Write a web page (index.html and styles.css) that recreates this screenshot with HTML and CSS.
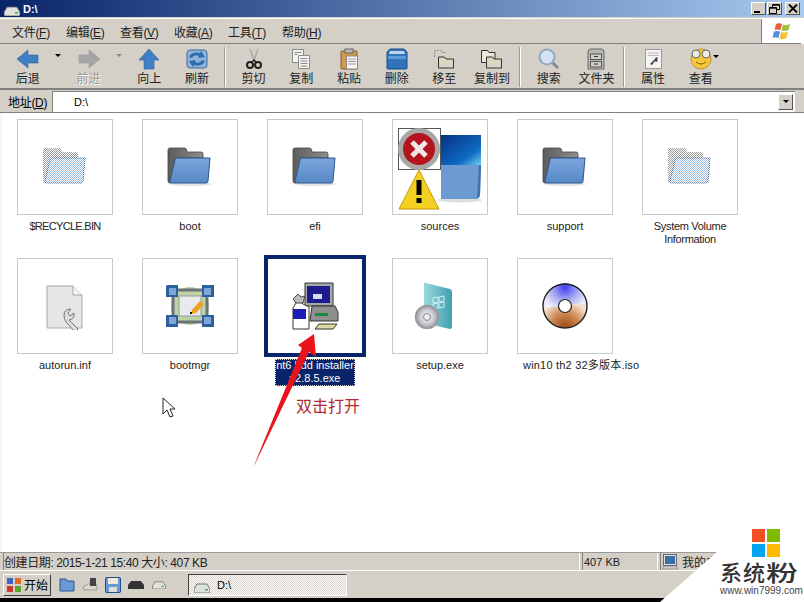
FILE: index.html
```html
<!DOCTYPE html>
<html lang="zh-CN">
<head>
    <meta charset="UTF-8">
    <title>D:\</title>
    <link rel="stylesheet" href="styles.css">
</head>
<body>
    <svg class="defs" width="0" height="0">
        <defs>
            <pattern id="dots" width="2" height="2" patternUnits="userSpaceOnUse">
                <rect width="1" height="1" fill="#fff"/>
                <rect x="1" y="1" width="1" height="1" fill="#fff"/>
            </pattern>
            <linearGradient id="folderBack" x1="0" y1="0" x2="1" y2="0">
                <stop offset="0" stop-color="#5c5c5c"/>
                <stop offset="1" stop-color="#8f8f8f"/>
            </linearGradient>
            <linearGradient id="folderFront" x1="0" y1="0" x2="0" y2="1">
                <stop offset="0" stop-color="#7ba6dc"/>
                <stop offset="1" stop-color="#5688c6"/>
            </linearGradient>
            <radialGradient id="discGrad" cx="0.5" cy="0.5" r="0.5">
                <stop offset="0" stop-color="#fff"/>
                <stop offset="0.6" stop-color="#c9c9d2"/>
                <stop offset="1" stop-color="#8d8d92"/>
            </radialGradient>
            <radialGradient id="udiscTop" gradientUnits="userSpaceOnUse" cx="23" cy="4" r="24">
                <stop offset="0" stop-color="#3c3cf2"/>
                <stop offset="0.55" stop-color="#a9a9f2"/>
                <stop offset="1" stop-color="#eeeefc"/>
            </radialGradient>
            <radialGradient id="udiscBottom" gradientUnits="userSpaceOnUse" cx="23" cy="44" r="26">
                <stop offset="0" stop-color="#9c4c18"/>
                <stop offset="0.55" stop-color="#cf8a54"/>
                <stop offset="1" stop-color="#f3e2d0"/>
            </radialGradient>
            <symbol id="folder" viewBox="0 0 48 48">
                <ellipse cx="24" cy="41" rx="21" ry="2" fill="#dfe3ea"/>
                <path d="M2 7q0-2 2-2h15q1.500 0 2 4h14q2 0 2 2v4H9L5 40H4q-2 0-2-2z" fill="url(#folderBack)" stroke="#444" stroke-width=".8"/>
                <path d="M9.500 15h34.500L42 38q0 2-2 2H6q-2 0-2-2z" fill="url(#folderFront)" stroke="#2f5587"/>
            </symbol>
            <symbol id="folderGhost" viewBox="0 0 48 48">
                <path d="M2 7q0-2 2-2h15q1.500 0 2 4h14q2 0 2 2v4H9L5 40H4q-2 0-2-2z" fill="#9a9a9a"/>
                <path d="M9.500 15h34.500L42 38q0 2-2 2H6q-2 0-2-2z" fill="#9dbde6" stroke="#2f5587"/>
                <rect width="48" height="48" fill="url(#dots)"/>
            </symbol>
            <symbol id="drive" viewBox="0 0 16 10">
                <path d="M3 1h10l3 5v3q0 1-1 1H1q-1 0-1-1V6z" fill="#dfe3dc" stroke="#555" stroke-width=".8"/>
                <rect x="11" y="6" width="3" height="1.500" fill="#4a4"/>
            </symbol>
        </defs>
    </svg>

    <div class="window">
        <div class="titlebar">
            <svg class="title-icon" width="16" height="10"><use href="#drive"/></svg>
            <span class="title-text">D:\</span>
            <div class="win-buttons">
                <span class="win-btn"><i class="min-mark"></i></span>
                <span class="win-btn"><svg width="11" height="10" viewBox="0 0 11 10"><path d="M3.500 3V.5h7v5H8M.5 3.500h7v6h-7z M.5 4.200h7M3.500 1.200h7" fill="none" stroke="#000"/></svg></span>
                <span class="win-btn close-btn"><svg width="10" height="9" viewBox="0 0 10 9"><path d="M1 .5l8 8M9 .5l-8 8" stroke="#000" stroke-width="1.800"/></svg></span>
            </div>
        </div>

        <div class="menubar">
            <div class="menu-items">
                <span>文件(<u>F</u>)</span>
                <span>编辑(<u>E</u>)</span>
                <span>查看(<u>V</u>)</span>
                <span>收藏(<u>A</u>)</span>
                <span>工具(<u>T</u>)</span>
                <span>帮助(<u>H</u>)</span>
            </div>
            <div class="brand">
                <svg width="20" height="19" viewBox="0 0 20 19">
                    <path d="M4 2q3-1.500 6 0l-1.500 6q-3-1-6 0z" fill="#e8603a"/>
                    <path d="M11 2.500q3 1.500 7-.5l-1.500 6q-3.500 1.500-7 .5z" fill="#9ac23c"/>
                    <path d="M2 9.500q3-1 6 0L6.500 16q-3-1.500-6 0z" fill="#4f8fdc"/>
                    <path d="M9 10q3.500 1 7-.5L14.500 16q-3.500 2-7 .5z" fill="#f2c23a"/>
                </svg>
            </div>
        </div>

        <div class="toolbar">
            <div class="tool">
                <svg width="24" height="22" viewBox="0 0 24 22"><path d="M1 11L12 2v5h10v8H12v5z" fill="#3f7fc4" stroke="#2a5f9e" stroke-width=".6"/></svg>
                <span>后退</span>
            </div>
            <div class="drop"><i class="caret"></i></div>
            <div class="tool tool-off">
                <svg width="24" height="22" viewBox="0 0 24 22"><path d="M23 11L12 2v5H2v8h10v5z" fill="#a5a5a5" stroke="#999" stroke-width=".6"/></svg>
                <span>前进</span>
            </div>
            <div class="drop"><i class="caret caret-off"></i></div>
            <div class="tool">
                <svg width="24" height="22" viewBox="0 0 24 22"><path d="M12 1l10 11h-5v9H7v-9H2z" fill="#3f7fc4" stroke="#2a5f9e" stroke-width=".6"/></svg>
                <span>向上</span>
            </div>
            <div class="tool">
                <svg width="24" height="22" viewBox="0 0 24 22">
                    <rect x="2" y="2" width="20" height="18" rx="3" fill="#8fb3d9" stroke="#3a6ea5"/>
                    <path d="M4 9q3-6 11-4l1-2 4 6-7 1 1-2q-5-2-7 2z" fill="#2f6cae"/>
                    <path d="M20 13q-3 6-11 4l-1 2-4-6 7-1-1 2q5 2 7-2z" fill="#2f6cae"/>
                </svg>
                <span>刷新</span>
            </div>
            <div class="tool-sep"></div>
            <div class="tool">
                <svg width="24" height="22" viewBox="0 0 24 22" fill="none">
                    <path d="M8 1l4 11M16 1l-4 11" stroke="#a9a9a9" stroke-width="1.400"/>
                    <circle cx="8" cy="17" r="3" stroke="#222" stroke-width="2"/>
                    <circle cx="16" cy="17" r="3" stroke="#222" stroke-width="2"/>
                    <path d="M10 14l2-2 2 2" stroke="#222" stroke-width="1.500"/>
                </svg>
                <span>剪切</span>
            </div>
            <div class="tool">
                <svg width="24" height="22" viewBox="0 0 24 22" fill="#f4f4f2" stroke="#8a8a8a">
                    <path d="M3.500 1.500h11v13h-11z"/>
                    <path d="M9.500 7.500h11v13h-11z"/>
                    <path d="M5.500 4.500h7M5.500 6.500h3M11.500 10.500h7M11.500 13h7M11.500 15.500h7M11.500 18h7" fill="none"/>
                </svg>
                <span>复制</span>
            </div>
            <div class="tool">
                <svg width="24" height="22" viewBox="0 0 24 22">
                    <rect x="4" y="3" width="16" height="18" rx="1" fill="#d39a4e" stroke="#8a5a20"/>
                    <rect x="8" y="1" width="8" height="4" fill="#b9b9b9" stroke="#666"/>
                    <rect x="9.500" y="8" width="11" height="13" fill="#f6f6f4" stroke="#888"/>
                    <path d="M11 11h8M11 13.500h8M11 16h8" stroke="#999"/>
                </svg>
                <span>粘贴</span>
            </div>
            <div class="tool">
                <svg width="24" height="22" viewBox="0 0 24 22">
                    <path d="M2 4l3-3h14l3 3v16q0 1-1 1H3q-1 0-1-1z" fill="#2f73b8" stroke="#1c4d85"/>
                    <path d="M5 3h14l1 3H4z" fill="#bcd4ea"/>
                    <path d="M3 8h18v3H3z" fill="#5c9bd8"/>
                </svg>
                <span>删除</span>
            </div>
            <div class="tool">
                <svg width="24" height="22" viewBox="0 0 24 22">
                    <path d="M2.500 9V2.500h6l1.500 2h4" fill="none" stroke="#888" stroke-dasharray="2 1"/>
                    <path d="M6.500 9h6l1.500 2h7.500v9h-15z" fill="#d8d8c0" stroke="#333"/>
                </svg>
                <span>移至</span>
            </div>
            <div class="tool">
                <svg width="24" height="22" viewBox="0 0 24 22">
                    <path d="M1.500 2.500h6l1.500 2h6v10h-13.500z" fill="#e8e8d8" stroke="#333"/>
                    <path d="M6.500 9h6l1.500 2h7.500v9h-15z" fill="#d8d8c0" stroke="#333"/>
                </svg>
                <span>复制到</span>
            </div>
            <div class="tool-sep"></div>
            <div class="tool">
                <svg width="24" height="22" viewBox="0 0 24 22">
                    <path d="M15 14l6 6" stroke="#888" stroke-width="3"/>
                    <circle cx="10" cy="9" r="7.500" fill="#d5e3f3" stroke="#93a9c3" stroke-width="2"/>
                </svg>
                <span>搜索</span>
            </div>
            <div class="tool">
                <svg width="24" height="22" viewBox="0 0 24 22">
                    <path d="M4 4q0-3 3-3h10q3 0 3 3v17H4z" fill="#b9b9b4" stroke="#666"/>
                    <rect x="6.500" y="6" width="11" height="5.500" fill="#cfcfca" stroke="#555"/>
                    <rect x="6.500" y="13.500" width="11" height="5.500" fill="#cfcfca" stroke="#555"/>
                    <path d="M10 8.500h4M10 16h4" stroke="#333"/>
                </svg>
                <span>文件夹</span>
            </div>
            <div class="tool-sep"></div>
            <div class="tool">
                <svg width="24" height="22" viewBox="0 0 24 22">
                    <rect x="4.500" y="1.500" width="16" height="19" fill="#f4f4f2" stroke="#9a9a9a"/>
                    <path d="M7 5h11M7 7.500h11" stroke="#bbb"/>
                    <path d="M9 16l5-5 1-2 2 1-1 2 1 1-2 1-1-1-3 4z" fill="#444"/>
                </svg>
                <span>属性</span>
            </div>
            <div class="tool tool-view">
                <svg width="24" height="22" viewBox="0 0 24 22">
                    <circle cx="12" cy="11" r="10" fill="#f5c83c" stroke="#c8902a"/>
                    <circle cx="7" cy="6" r="4" fill="#e8efe8" stroke="#666"/>
                    <circle cx="17" cy="6" r="4" fill="#e8efe8" stroke="#666"/>
                    <path d="M7 14q5 4 10 0" fill="none" stroke="#7a5a10"/>
                </svg>
                <span>查看</span>
                <i class="caret caret-view"></i>
            </div>
        </div>

        <div class="addressbar">
            <span class="addr-label">地址(<u>D</u>)</span>
            <div class="addr-input">
                <span class="addr-text">D:\</span>
                <span class="addr-drop"><i class="caret"></i></span>
            </div>
        </div>

        <div class="files">
            <div class="file">
                <div class="tile"><svg width="48" height="48"><use href="#folderGhost"/></svg></div>
                <div class="name name-caps">$RECYCLE.BIN</div>
            </div>
            <div class="file">
                <div class="tile"><svg width="48" height="48"><use href="#folder"/></svg></div>
                <div class="name">boot</div>
            </div>
            <div class="file">
                <div class="tile"><svg width="48" height="48"><use href="#folder"/></svg></div>
                <div class="name">efi</div>
            </div>
            <div class="file">
                <div class="tile tile-sources">
                    <svg width="84" height="82" viewBox="0 0 84 82">
                        <defs>
                            <linearGradient id="sky" x1="0" y1="0" x2="1" y2="1">
                                <stop offset="0" stop-color="#05317f"/>
                                <stop offset="0.7" stop-color="#0f6cc4"/>
                                <stop offset="1" stop-color="#6fd0ee"/>
                            </linearGradient>
                        </defs>
                        <ellipse cx="62" cy="72" rx="22" ry="2.500" fill="#ddd"/>
                        <rect x="43" y="7" width="40" height="30" fill="url(#sky)"/>
                        <path d="M43 37h40l-1 30q0 4-4 4H43z" fill="#6b9bd0"/>
                        <path d="M81 37h2l-1 30-3 4z" fill="#3f70aa"/>
                        <rect x=".5" y=".5" width="42" height="41" fill="#fff" stroke="#555"/>
                        <circle cx="21" cy="21" r="21" fill="#a8a8a8"/>
                        <circle cx="21" cy="21" r="16" fill="#b3141e"/>
                        <path d="M14 14l14 14M28 14L14 28" stroke="#f2e6e6" stroke-width="5"/>
                        <path d="M21 42l20 39H1z" fill="#f3d020" stroke="#c69a10"/>
                        <rect x="18.500" y="52" width="5" height="15" fill="#000"/>
                        <rect x="18.500" y="70" width="5" height="5" fill="#000"/>
                    </svg>
                </div>
                <div class="name">sources</div>
            </div>
            <div class="file">
                <div class="tile"><svg width="48" height="48"><use href="#folder"/></svg></div>
                <div class="name">support</div>
            </div>
            <div class="file">
                <div class="tile"><svg width="48" height="48"><use href="#folderGhost"/></svg></div>
                <div class="name name-tight">System Volume Information</div>
            </div>
            <div class="file">
                <div class="tile">
                    <svg width="48" height="48" viewBox="0 0 48 48">
                        <path d="M6 4h26l9 9v33H6z" fill="#e6e6e6" stroke="#a8a8a8"/>
                        <path d="M32 4v9h9" fill="#f5f5f5" stroke="#a8a8a8"/>
                        <path d="M23 33q0-6 7-6l-3 4 2 3 4-3q1 6-5 7l9 9-3 3-9-10q-2-3-2-7z" fill="#dcdcdc" stroke="#777"/>
                    </svg>
                </div>
                <div class="name">autorun.inf</div>
            </div>
            <div class="file">
                <div class="tile">
                    <svg width="48" height="42" viewBox="0 0 48 42">
                        <circle cx="24" cy="21" r="19" fill="#bcd3a4"/>
                        <rect x="7" y="5" width="34" height="32" fill="none" stroke="#6d7278" stroke-width="3"/>
                        <rect x="13" y="11" width="22" height="20" fill="#e8eaec" stroke="#999"/>
                        <path d="M1 0h11v12H0V1zM36 0h12v12H36zM0 30h12v12H0zM36 30h12v12H36z" fill="#2f5f9e"/>
                        <path d="M3 3h7v7H3zM38 3h7v7h-7zM3 32h7v7H3zM38 32h7v7h-7z" fill="#7ea6d6"/>
                        <path d="M26 25l8-9 4 3-8 9-5 1z" fill="#f0a020"/>
                        <rect x="24" y="27" width="2" height="2" fill="#111"/>
                    </svg>
                </div>
                <div class="name">bootmgr</div>
            </div>
            <div class="file file-selected">
                <div class="tile">
                    <svg width="48" height="48" viewBox="0 0 48 48">
                        <path d="M14 1h28v23H14z" fill="#a8a8a8" stroke="#333"/>
                        <rect x="16" y="4" width="23" height="17" fill="#1c1c8e"/>
                        <rect x="22" y="12" width="9" height="5" fill="#dcdcf0"/>
                        <path d="M21 24h23l3 6v9H19z" fill="#8f8f8f" stroke="#333"/>
                        <rect x="24" y="31" width="13" height="3" fill="#1a8a3a"/>
                        <path d="M24 47l4-5h18l-4 5z" fill="#e0d8a0" stroke="#333"/>
                        <path d="M2 26l5-8 5 4 6 3v22H2z" fill="#fff" stroke="#333"/>
                        <path d="M2 27h13v10H2z" fill="#1c1cb8"/>
                        <path d="M2 17l5-5 3 3 4-1-2 7H5z" fill="#bbb" stroke="#444"/>
                    </svg>
                </div>
                <div class="name"><span>nt6 hdd installer v2.8.5.exe</span></div>
            </div>
            <div class="file">
                <div class="tile tile-setup">
                    <svg width="40" height="48" viewBox="0 0 40 48">
                        <defs>
                            <linearGradient id="book" x1="0" y1="0" x2="1" y2="0">
                                <stop offset="0" stop-color="#9ad8dc"/>
                                <stop offset="1" stop-color="#3f9fb0"/>
                            </linearGradient>
                        </defs>
                        <path d="M10 2q0-2 2-1l24 6q2 1 2 3v34q0 3-2 3l-26-6z" fill="url(#book)"/>
                        <path d="M19 16l5-1v5l-5 1zM25 15l5-1v5l-5 1zM19 22l5-1v5l-5 1zM25 21l5-1v5l-5 1z" fill="none" stroke="#d2eef0"/>
                        <circle cx="13" cy="35" r="12" fill="url(#discGrad)" stroke="#999" stroke-width=".5"/>
                        <circle cx="13" cy="35" r="3.500" fill="#eee" stroke="#888"/>
                    </svg>
                </div>
                <div class="name">setup.exe</div>
            </div>
            <div class="file">
                <div class="tile">
                    <svg width="46" height="46" viewBox="0 0 46 46">
                        <path d="M1 25A22 22 0 0 1 45 20z" fill="url(#udiscTop)"/>
                        <path d="M1 25l44-5A22 22 0 0 1 1 25z" fill="url(#udiscBottom)"/>
                        <circle cx="23" cy="23" r="22" fill="none" stroke="#222" stroke-width="1.400"/>
                        <circle cx="23" cy="23" r="6.500" fill="#fff" stroke="#222" stroke-width="1.200"/>
                    </svg>
                </div>
                <div class="name name-wide">win10 th2 32多版本.iso</div>
            </div>
        </div>

        <div class="statusbar">
            <div class="panel panel-main">创建日期: 2015-1-21 15:40 大小: 407 KB</div>
            <div class="panel panel-size">407 KB</div>
            <div class="panel panel-zone">
                <svg width="16" height="16" viewBox="0 0 16 16">
                    <rect x="1.500" y=".5" width="13" height="11" fill="#ddd" stroke="#666"/>
                    <rect x="3" y="2" width="10" height="8" fill="#3a6ea5"/>
                    <path d="M0 15l2-3h12l2 3z" fill="#ccc" stroke="#777" stroke-width=".6"/>
                </svg>
                <span>我的电</span>
            </div>
        </div>

        <div class="taskbar">
            <div class="start-btn">
                <svg width="14" height="14" viewBox="0 0 14 14">
                    <rect width="6" height="6" fill="#3b66c4"/>
                    <rect x="8" width="6" height="6" fill="#e26b1e"/>
                    <rect y="8" width="6" height="6" fill="#d0342c"/>
                    <rect x="8" y="8" width="6" height="6" fill="#5aa32c"/>
                </svg>
                <span>开始</span>
            </div>
            <div class="quick">
                <svg width="16" height="15" viewBox="0 0 16 15"><path d="M1 2h6l1 2h7v10H1z" fill="#6a9ad4" stroke="#2f5587"/></svg>
                <svg width="16" height="15" viewBox="0 0 16 15"><path d="M1 10l5-3h8l1 3v3H2z" fill="#d8d8d0" stroke="#777" stroke-width=".6"/><rect x="8" y="1" width="6" height="8" fill="#444"/></svg>
                <svg width="16" height="16" viewBox="0 0 16 16"><rect x=".5" y=".5" width="15" height="15" rx="1" fill="#6a9ad4" stroke="#1c4d85"/><rect x="3" y="1" width="10" height="6" fill="#f0e8d8"/><rect x="4" y="10" width="8" height="5" fill="#ddd"/></svg>
                <svg width="16" height="8" viewBox="0 0 16 8"><path d="M3 0h10l3 4v4H0V4z" fill="#333"/></svg>
                <svg width="16" height="8" viewBox="0 0 16 8"><use href="#drive"/></svg>
            </div>
            <div class="task-btn">
                <svg width="16" height="10"><use href="#drive"/></svg>
                <span>D:\</span>
            </div>
        </div>
        <div class="screen-edge"></div>
    </div>

    <!-- 标注和水印 -->
    <svg class="arrow" width="80" height="140" viewBox="0 0 80 140">
        <path d="M1 135L50 15l-4-3L62 1l2 23-7-5z" fill="#e8131b"/>
    </svg>
    <div class="note">双击打开</div>
    <svg class="cursor" width="14" height="22" viewBox="0 0 14 22">
        <path d="M1 1v16l4-4 3 7 3-1-3-7h5z" fill="#fff" stroke="#222"/>
    </svg>
    <div class="watermark">
        <div class="wm-logo"><i class="wm-r"></i><i class="wm-g"></i><i class="wm-b"></i><i class="wm-y"></i></div>
        <div class="wm-name">系统<span class="wm-fen">粉</span></div>
        <div class="wm-url">www.win7999.com</div>
    </div>
</body>
</html>
```

FILE: styles.css
```css
/* janela */
html, body {
    margin: 0;
    padding: 0;
    width: 804px;
    height: 602px;
    overflow: hidden;
    background-color: #fff;
}
body {
    position: relative;
    font-family: "Liberation Sans", "Noto Sans CJK SC", sans-serif;
    font-size: 12px;
    color: #000;
}
.defs {
    position: absolute;
}
.window {
    display: flex;
    flex-direction: column;
    height: 602px;
}

/* barra de titulo */
.titlebar {
    display: flex;
    align-items: center;
    height: 17px;
    flex: none;
    padding: 0 4px;
    background: linear-gradient(to right, #0a246a, #a6caf0);
    border-bottom: 1px solid #d4d0c8;
}
.title-icon {
    margin-top: 5px;
}
.title-text {
    margin-left: 3px;
    color: #fff;
    font-weight: bold;
    font-size: 11px;
}
.win-buttons {
    display: flex;
    margin-left: auto;
    gap: 1px;
}
.win-btn {
    display: flex;
    align-items: center;
    justify-content: center;
    width: 15px;
    height: 13px;
    background-color: #d4d0c8;
    border: solid 1px;
    border-color: #fff #555 #555 #fff;
    box-sizing: border-box;
}
.close-btn {
    margin-left: 2px;
}
.min-mark {
    display: block;
    width: 6px;
    height: 2px;
    margin-top: 7px;
    margin-right: 3px;
    background-color: #000;
}

/* menu */
.menubar {
    display: flex;
    justify-content: space-between;
    height: 24px;
    flex: none;
    margin: 0 3px 0 0;
    padding-left: 12px;
    background-color: #d4d0c8;
    border-top: 1px solid #fff;
    border-bottom: 1px solid #808080;
}
.menu-items {
    display: flex;
    align-items: center;
    gap: 16px;
    color: #222;
}
.menu-items span {
    width: 38px;
    white-space: nowrap;
    letter-spacing: -.3px;
}
.brand {
    display: flex;
    align-items: center;
    justify-content: center;
    width: 39px;
    background-color: #fff;
    border-left: 1px solid #808080;
}

/* barra de ferramentas */
.toolbar {
    display: flex;
    height: 44px;
    flex: none;
    padding-left: 4px;
    background-color: #d4d0c8;
    border-bottom: 2px solid #808080;
}
.tool {
    display: flex;
    flex-direction: column;
    align-items: center;
    position: relative;
    width: 47.700px;
    padding-top: 4px;
    box-sizing: border-box;
    color: #222;
}
.tool svg {
    flex: none;
}
.tool span {
    margin-top: 2px;
    line-height: 15px;
    white-space: nowrap;
}
.tool-off span {
    color: #999;
    text-shadow: 1px 1px 0 #fff;
}
.drop {
    display: flex;
    align-items: center;
    justify-content: center;
    width: 13px;
    padding-bottom: 21px;
    box-sizing: border-box;
}
.caret {
    display: block;
    width: 0;
    height: 0;
    border-left: 3px solid transparent;
    border-right: 3px solid transparent;
    border-top: 3px solid #000;
}
.caret-off {
    border-top-color: #888;
}
.caret-view {
    position: absolute;
    top: 11px;
    right: 6px;
}
.tool-sep {
    width: 1px;
    height: 40px;
    margin: 3px 4px 0 3px;
    background-color: #9a9a9a;
    border-right: 1px solid #fff;
    flex: none;
}

/* endereco */
.addressbar {
    display: flex;
    align-items: center;
    height: 23px;
    flex: none;
    padding: 0 8px;
    background-color: #d4d0c8;
    border-bottom: 1px solid #808080;
    box-sizing: border-box;
}
.addr-label {
    width: 44px;
    flex: none;
    white-space: nowrap;
    letter-spacing: -.3px;
}
.addr-input {
    display: flex;
    align-items: center;
    justify-content: space-between;
    flex: 1;
    height: 21px;
    padding: 0 2px 0 21px;
    background-color: #fff;
    border-left: 1px solid #808080;
    border-top: 1px solid #808080;
    box-sizing: border-box;
    margin-right: 1px;
}
.addr-text {
    font-size: 11px;
}
.addr-drop {
    display: flex;
    align-items: center;
    justify-content: center;
    width: 15px;
    height: 16px;
    background-color: #d4d0c8;
    border: solid 1px;
    border-color: #fff #555 #555 #fff;
    box-sizing: border-box;
}

/* arquivos */
.files {
    display: grid;
    grid-template-columns: repeat(6, 96px);
    grid-auto-rows: 139px;
    column-gap: 29px;
    align-content: start;
    flex: 1;
    padding: 6px 0 0 15px;
    background-color: #fff;
    border-left: 2px solid #eef7fa;
    box-sizing: border-box;
}
.file {
    display: flex;
    flex-direction: column;
    align-items: center;
    width: 96px;
}
.tile {
    display: flex;
    align-items: center;
    justify-content: center;
    width: 96px;
    height: 96px;
    flex: none;
    background-color: #fff;
    border: 1px solid #c8c8c8;
    box-sizing: border-box;
}
.tile-sources svg {
    margin-top: 4px;
}
.tile-setup svg {
    margin-right: 12px;
}
.name {
    margin-top: 5px;
    width: 96px;
    font-size: 11px;
    line-height: 13px;
    text-align: center;
    color: #222;
}
.name-caps {
    letter-spacing: -.7px;
}
.name-tight {
    letter-spacing: -.3px;
}
.name-wide {
    align-self: flex-start;
    width: auto;
    margin-left: 6px;
    white-space: nowrap;
    letter-spacing: .2px;
}
.file-selected .tile {
    border-color: #0a246a;
    outline: 3px solid #0a246a;
}
.file-selected .name span {
    display: block;
    margin: 0 8px;
    padding: 0 0 1px;
    background-color: #0a246a;
    color: #fff;
    outline: 1px dotted #d4d0c8;
    outline-offset: -1px;
}

/* status */
.statusbar {
    display: flex;
    gap: 2px;
    height: 19px;
    flex: none;
    padding: 0 3px;
    background-color: #d4d0c8;
    border-top: 1px solid #9a9a9a;
    border-bottom: 1px solid #fff;
    box-sizing: border-box;
}
.panel {
    display: flex;
    align-items: center;
    gap: 4px;
    border-right: 1px solid #fff;
    border-left: 1px solid #808080;
    box-sizing: border-box;
    white-space: nowrap;
    font-size: 11px;
    color: #222;
}
.panel-main {
    width: 577px;
    font-size: 12px;
    letter-spacing: -.4px;
}
.panel-size {
    width: 76px;
    padding-left: 1px;
}
.panel-zone {
    width: 60px;
    padding-left: 1px;
    font-size: 12px;
}

/* barra de tarefas */
.taskbar {
    display: flex;
    align-items: center;
    height: 27px;
    flex: none;
    padding: 0 3px;
    background-color: #d4d0c8;
    box-sizing: border-box;
}
.start-btn {
    display: flex;
    align-items: center;
    gap: 3px;
    width: 48px;
    height: 22px;
    padding-left: 3px;
    border: solid 1px;
    border-color: #fff #404040 #404040 #fff;
    box-sizing: border-box;
    flex: none;
}
.quick {
    display: flex;
    align-items: center;
    gap: 7px;
    width: 137px;
    padding-left: 8px;
    box-sizing: border-box;
    flex: none;
}
.task-btn {
    display: flex;
    align-items: center;
    gap: 7px;
    width: 159px;
    height: 22px;
    padding-left: 5px;
    border: solid 1px;
    border-color: #404040 #fff #fff #404040;
    box-sizing: border-box;
    font-size: 11px;
    background-color: #e8e6e0;
    background-image: repeating-conic-gradient(#fff 0 25%, #d4d0c8 0 50%);
    background-size: 2px 2px;
}
.task-btn svg {
    margin-top: 6px;
}
.screen-edge {
    height: 4px;
    flex: none;
    background-color: #000;
}

/* anotacao */
.arrow {
    position: absolute;
    left: 252px;
    top: 333px;
}
.note {
    position: absolute;
    left: 296px;
    top: 397px;
    font-size: 16px;
    line-height: 20px;
    color: #b3282c;
}
.cursor {
    position: absolute;
    left: 162px;
    top: 397px;
}
.watermark {
    position: absolute;
    left: 660px;
    top: 551px;
    width: 144px;
    height: 51px;
}
.watermark::before {
    content: "";
    position: absolute;
    inset: 0;
    background-color: #fff;
    clip-path: polygon(58px 0, 100% 0, 100% 100%, 0 100%);
}
.wm-logo {
    position: absolute;
    left: 92px;
    top: -22px;
    display: grid;
    grid-template-columns: 13px 13px;
    grid-auto-rows: 13px;
    gap: 2px;
}
.wm-r { background-color: #f25022; }
.wm-g { background-color: #7fba00; }
.wm-b { background-color: #00a4ef; }
.wm-y { background-color: #ffb900; }
.wm-name {
    position: absolute;
    left: 60px;
    top: 11px;
    font-size: 22px;
    line-height: 24px;
    font-weight: 500;
    letter-spacing: 1px;
    color: #333;
    white-space: nowrap;
}
.wm-fen {
    display: inline-block;
    transform: scaleX(1.45);
    transform-origin: left center;
}
.wm-url {
    position: absolute;
    left: 60px;
    top: 35px;
    width: 77px;
    font-size: 10px;
    line-height: 10px;
    text-align: center;
    color: #444;
    white-space: nowrap;
}
```
